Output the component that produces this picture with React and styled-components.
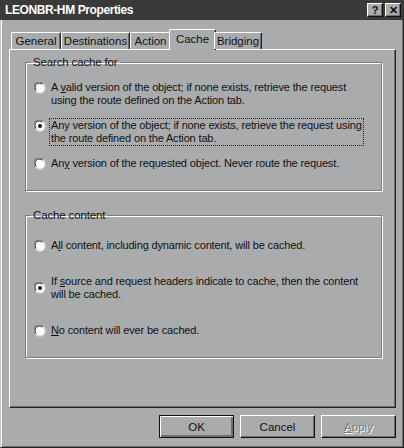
import styled, { createGlobalStyle } from 'styled-components';

const Global = createGlobalStyle`
  body {
    margin: 0;
    background: #a9abad;
    font-family: "Liberation Sans", Arial, sans-serif;
  }
`;

const Window = styled.div`
  width: 404px;
  height: 448px;
  box-sizing: border-box;
  background: #a9abad;
  border-left: 1px solid #c8c9ca;
  border-right: 1px solid #222;
  border-bottom: 1px solid #222;
  box-shadow: inset 1px 0 #fff, inset -1px -1px #6d6e70;
  display: flex;
  flex-direction: column;
  color: #111;
  font-size: 11px;
`;

const TitleBar = styled.div`
  height: 20px;
  margin-left: -1px;
  margin-right: -1px;
  background: #3a3a3b;
  display: flex;
  align-items: center;
  justify-content: space-between;
  padding: 0 3px 0 5px;
`;

const Title = styled.div`
  color: #fff;
  font-weight: bold;
  font-size: 12px;
  letter-spacing: -0.4px;
`;

const CapButtons = styled.div`
  display: flex;
  gap: 2px;
`;

const CapButton = styled.div`
  width: 16px;
  height: 14px;
  box-sizing: border-box;
  background: #a9abad;
  border-top: 1px solid #fff;
  border-left: 1px solid #fff;
  border-right: 1px solid #111;
  border-bottom: 1px solid #111;
  box-shadow: inset -1px -1px #6d6e70;
  display: flex;
  align-items: center;
  justify-content: center;
  font-weight: bold;
  font-size: 11px;
  color: #111;
  line-height: 1;
`;

const Body = styled.div`
  flex: 1;
  display: flex;
  flex-direction: column;
  padding: 9px 7px 0 8px;
`;

const TabStrip = styled.div`
  display: flex;
  align-items: flex-end;
  height: 20px;
  padding-left: 2px;
  position: relative;
  z-index: 1;
`;

const Tab = styled.div`
  box-sizing: border-box;
  width: ${(p) => p.$w}px;
  height: ${(p) => (p.$active ? 21 : 17)}px;
  margin: ${(p) => (p.$active ? '0 -2px -1px -2px' : '0')};
  padding-top: ${(p) => (p.$active ? 3 : 2)}px;
  background: #a9abad;
  border-top: 1px solid #fff;
  border-left: 1px solid #fff;
  border-right: 1px solid #222;
  border-radius: 2px 2px 0 0;
  box-shadow: inset -1px 0 #6d6e70;
  text-align: center;
  font-size: 11.5px;
  white-space: nowrap;
`;

const Panel = styled.div`
  height: 359px;
  box-sizing: border-box;
  border-top: 1px solid #fff;
  border-left: 1px solid #fff;
  border-right: 1px solid #222;
  border-bottom: 1px solid #222;
  box-shadow: inset -1px -1px #6d6e70;
  padding: 6px 13px 0 15px;
  display: flex;
  flex-direction: column;
  gap: 18px;
`;

const Group = styled.fieldset`
  margin: 0;
  padding: ${(p) => p.$pad};
  border: 1px solid #7b7c7e;
  box-shadow: inset 1px 1px #fff, 1px 1px #fff;
  display: flex;
  flex-direction: column;
  gap: ${(p) => p.$gap}px;
`;

const Legend = styled.legend`
  margin-left: -3px;
  padding: 0 2px;
  font-size: 11.5px;
  line-height: 13px;
  letter-spacing: -0.15px;
`;

const Row = styled.div`
  display: flex;
  align-items: ${(p) => (p.$center ? 'center' : 'flex-start')};
  gap: 5px;
`;

const Label = styled.div`
  line-height: 13px;
  padding: 0 1px;
  margin: 0 -1px;
  outline: ${(p) => (p.$focus ? '1px dotted #222' : 'none')};
  outline-offset: 0;
  white-space: nowrap;
  letter-spacing: -0.15px;
`;

const U = styled.span`
  text-decoration: underline;
`;

const RadioBox = styled.svg`
  flex: none;
  margin-top: ${(p) => (p.$center ? 0 : 0.5)}px;
`;

function Radio({ checked, center }) {
  return (
    <RadioBox width="12" height="12" viewBox="0 0 12 12" $center={center}>
      <circle cx="6" cy="6" r="5.5" fill="#fff" />
      <path d="M1.2 9.2 A5.5 5.5 0 0 1 9.2 1.2" stroke="#6d6e70" strokeWidth="1" fill="none" />
      <path d="M2.3 8.4 A4.3 4.3 0 0 1 8.4 2.3" stroke="#222" strokeWidth="1" fill="none" />
      <path d="M9.7 3.2 A4.3 4.3 0 0 1 3.2 9.7" stroke="#c8c9ca" strokeWidth="1" fill="none" />
      {checked && <circle cx="6" cy="6" r="2" fill="#111" />}
    </RadioBox>
  );
}

const ButtonRow = styled.div`
  display: flex;
  justify-content: flex-end;
  gap: 6px;
  padding: 7px 0 0 0;
`;

const Button = styled.div`
  width: 75px;
  height: 23px;
  box-sizing: border-box;
  display: flex;
  align-items: center;
  justify-content: center;
  font-size: 11.5px;
  border: 1px solid ${(p) => (p.$default ? '#111' : '#fff')};
  border-right-color: #111;
  border-bottom-color: #111;
  box-shadow: ${(p) =>
    p.$default
      ? 'inset 1px 1px #fff, inset -2px -2px #6d6e70'
      : 'inset -1px -1px #6d6e70'};
  color: ${(p) => (p.$disabled ? '#7b7c7e' : '#111')};
  text-shadow: ${(p) => (p.$disabled ? '1px 1px #fff' : 'none')};
`;

export default function App() {
  return (
    <>
      <Global />
      <Window>
        <TitleBar>
          <Title>LEONBR-HM Properties</Title>
          <CapButtons>
            <CapButton>?</CapButton>
            <CapButton>✕</CapButton>
          </CapButtons>
        </TitleBar>
        <Body>
          <TabStrip>
            <Tab $w={50}>General</Tab>
            <Tab $w={69}>Destinations</Tab>
            <Tab $w={41}>Action</Tab>
            <Tab $w={47} $active>Cache</Tab>
            <Tab $w={48}>Bridging</Tab>
          </TabStrip>
          <Panel>
            <Group $gap={12} $pad="12px 8px 20px 8px">
              <Legend>Search cache for</Legend>
              <Row>
                <Radio />
                <Label>
                  A <U>v</U>alid version of the object; if none exists, retrieve the request
                  <br />
                  using the route defined on the Action tab.
                </Label>
              </Row>
              <Row>
                <Radio checked />
                <Label $focus>
                  Any version of the object; if none exists, retrieve the request using
                  <br />
                  the route defined on the Action tab.
                </Label>
              </Row>
              <Row>
                <Radio />
                <Label>
                  An<U>y</U> version of the requested object. Never route the request.
                </Label>
              </Row>
            </Group>
            <Group $gap={23} $pad="17px 8px 20px 8px">
              <Legend>Cache content</Legend>
              <Row>
                <Radio />
                <Label>
                  A<U>l</U>l content, including dynamic content, will be cached.
                </Label>
              </Row>
              <Row $center>
                <Radio checked center />
                <Label>
                  If <U>s</U>ource and request headers indicate to cache, then the content
                  <br />
                  will be cached.
                </Label>
              </Row>
              <Row>
                <Radio />
                <Label>
                  <U>N</U>o content will ever be cached.
                </Label>
              </Row>
            </Group>
          </Panel>
          <ButtonRow>
            <Button $default>OK</Button>
            <Button>Cancel</Button>
            <Button $disabled>
              <span>
                <U>A</U>pply
              </span>
            </Button>
          </ButtonRow>
        </Body>
      </Window>
    </>
  );
}
